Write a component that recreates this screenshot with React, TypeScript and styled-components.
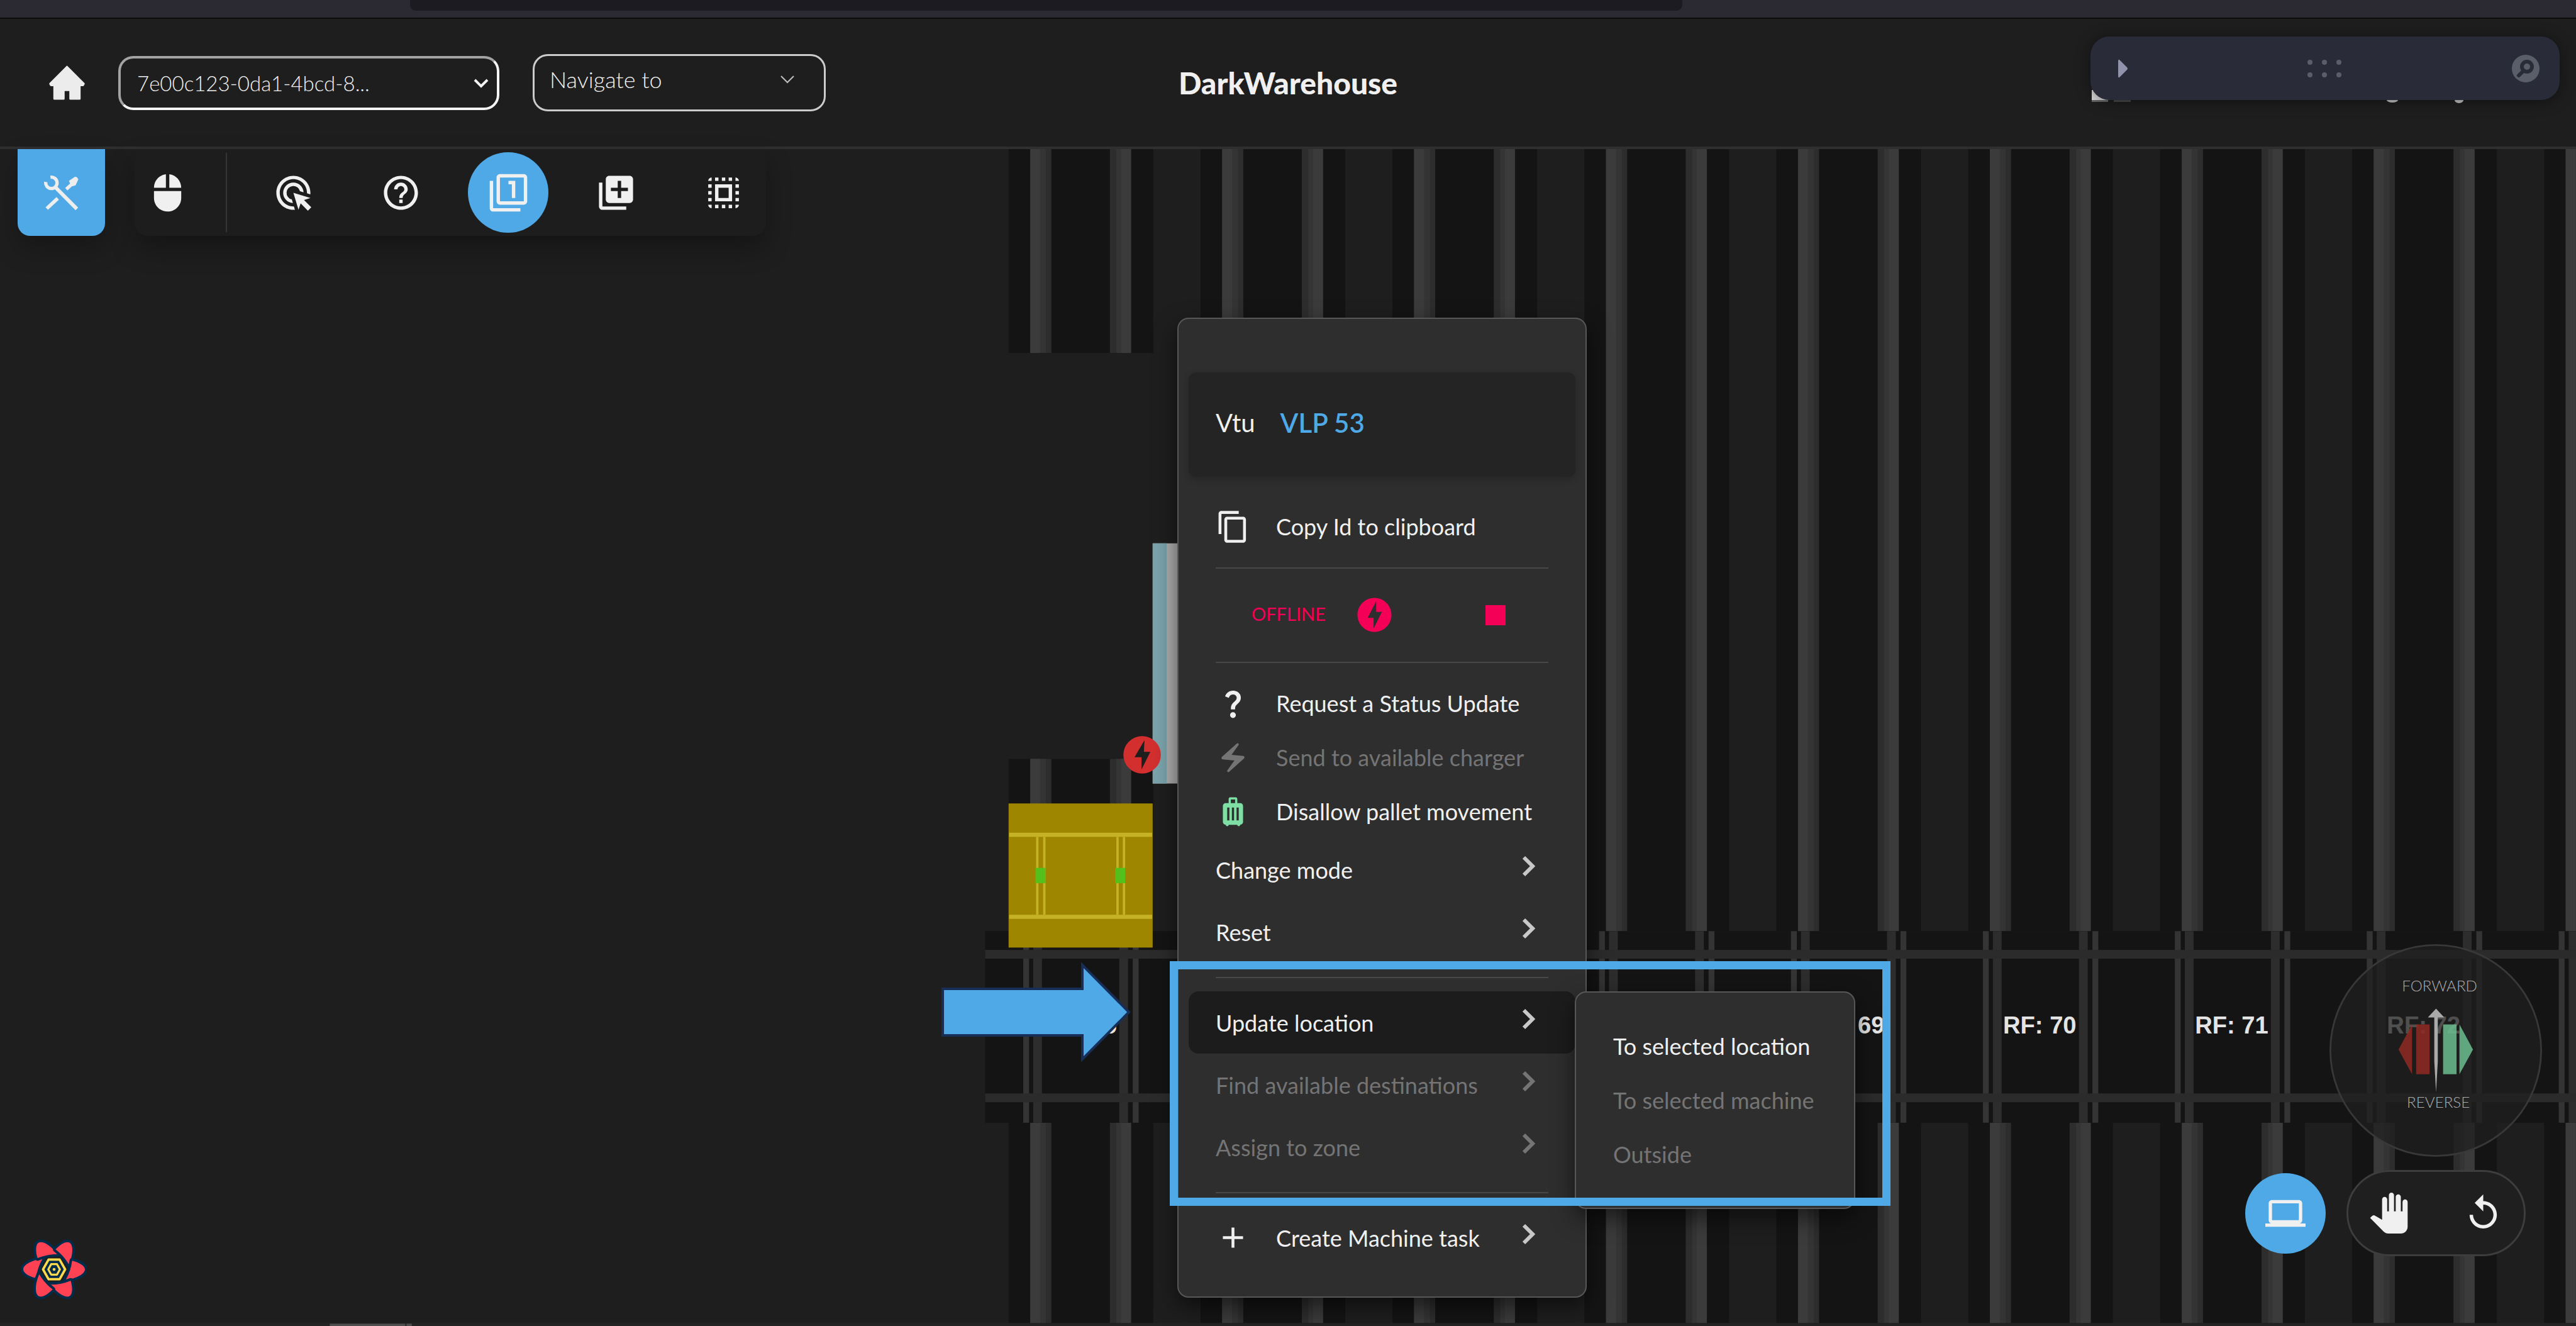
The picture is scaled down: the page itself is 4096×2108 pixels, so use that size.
import React from "react";
import styled, { createGlobalStyle, css } from "styled-components";
import {
  MdAdd,
  MdAdsClick,
  MdContentCopy,
  MdElectricBolt,
  MdFilter1,
  MdHelpOutline,
  MdLaptop,
  MdLibraryAdd,
  MdLuggage,
  MdMouse,
  MdOfflineBolt,
  MdPanTool,
  MdQuestionMark,
  MdReplay,
  MdSelectAll,
} from "react-icons/md";

const color = {
  page: "#1e1e1e",
  accent: "#4ea9e6",
  text: "#f0f0f0",
  muted: "#747474",
  surface: "#2e2e2e",
  outline: "#575757",
  danger: "#f50057",
};

const GlobalStyle = createGlobalStyle`
  *, *::before, *::after { box-sizing: border-box; }
  html, body, #root { height: 100%; }
  body {
    margin: 0;
    overflow: hidden;
    background: ${color.page};
    color: ${color.text};
    font-family: Lato, "Open Sans", sans-serif;
    font-size: 36px;
  }
  button, select { font: inherit; color: inherit; }
  button { border: 0; padding: 0; background: none; cursor: pointer; }
  svg { display: block; flex: none; }
`;

/* ---------- shell ---------- */

const Shell = styled.div`
  display: flex;
  flex-direction: column;
  height: 100vh;
`;

const BrowserStrip = styled.div`
  flex: none;
  height: 30px;
  padding: 0 1421px 0 652px;
  background: #2b2a33;
  border-bottom: 2px solid #0c0c0d;
`;

const AddressBar = styled.div`
  height: 17px;
  background: #1c1b22;
  border-radius: 0 0 9px 9px;
`;

const Header = styled.header`
  flex: none;
  display: grid;
  grid-template-columns: 1fr auto 1fr;
  align-items: center;
  height: 207px;
  padding: 0 26px;
  border-bottom: 4px solid #2f2f2f;
`;

const HeaderLeft = styled.div`
  display: flex;
  align-items: center;
  gap: 53px;
  padding-left: 52px;
`;

const HomeLink = styled.a`
  display: block;
  color: #ececec;
`;

const Title = styled.h1`
  margin: 0;
  font-size: 48px;
  font-weight: 900;
  line-height: 56px;
`;

const Picker = styled.div<{ $wide?: boolean }>`
  display: grid;
  grid-template-columns: minmax(0, 1fr) auto;
  align-items: center;
  width: ${(p) => (p.$wide ? 606 : 466)}px;
`;

const pickerBox = css`
  grid-area: 1 / 1 / 2 / 3;
  width: 100%;
  appearance: none;
  background: ${color.page};
  border-radius: 24px;
  font-weight: 300;
  text-overflow: ellipsis;
`;

const SessionSelect = styled.select`
  ${pickerBox}
  height: 86px;
  padding: 0 60px 0 26px;
  border: 4px solid;
  border-color: #a3a3a3 #f4f4f4 #f4f4f4 #a3a3a3;
  font-size: 33px;
`;

const NavigateSelect = styled.select`
  ${pickerBox}
  height: 91px;
  padding: 0 80px 12px 24px;
  border: 3px solid #cccccc;
  font-size: 36px;
`;

const PickerArrow = styled.span<{ $inset: number; $raised?: boolean }>`
  grid-area: 1 / 2;
  z-index: 1;
  margin-right: ${(p) => p.$inset}px;
  padding-bottom: ${(p) => (p.$raised ? 12 : 0)}px;
  pointer-events: none;
`;

const HeaderRight = styled.div`
  position: relative;
  z-index: 0;
  align-self: start;
  justify-self: end;
  width: 746px;
  margin-top: 28px;
`;

const CoveredItems = styled.svg`
  position: absolute;
  top: 0;
  left: 0;
`;

const DevPanel = styled.div`
  position: relative;
  display: flex;
  align-items: center;
  justify-content: space-between;
  height: 101px;
  padding: 0 32px 0 43px;
  background: #292c38;
  border-radius: 30px;
  box-shadow: 0 2px 24px rgba(0, 0, 0, 0.45);
`;

/* ---------- workspace ---------- */

const Workspace = styled.main`
  position: relative;
  flex: 1;
  min-height: 0;
`;

const FloorSvg = styled.svg`
  position: absolute;
  inset: 0;
  width: 100%;
  height: 100%;
`;

const ToolRow = styled.div`
  position: relative;
  display: flex;
  gap: 47px;
  padding-left: 28px;
`;

const ToolsToggle = styled.button`
  display: grid;
  place-items: center;
  width: 139px;
  height: 138px;
  background: ${color.accent};
  border-radius: 0 0 20px 20px;
  box-shadow: 0 20px 40px rgba(0, 0, 0, 0.25);
`;

const ToolPanel = styled.div`
  display: flex;
  align-items: center;
  height: 138px;
  padding-right: 4px;
  background: #1d1d1d;
  border-radius: 0 0 20px 20px;
  box-shadow: 0 20px 40px rgba(0, 0, 0, 0.3);
`;

const ToolDivider = styled.span`
  width: 2px;
  height: 126px;
  margin: 0 41px;
  background: #353535;
`;

const ToolGroup = styled.div`
  display: flex;
  gap: 43px;
`;

const RoundButton = styled.button<{ $active?: boolean; $narrow?: boolean }>`
  display: grid;
  place-items: center;
  width: ${(p) => (p.$narrow ? 104 : 128)}px;
  height: 128px;
  border-radius: 64px;
  color: #f0f0f0;
  background: ${(p) => (p.$active ? color.accent : "none")};
`;

/* ---------- context menu ---------- */

const popup = css`
  position: absolute;
  margin: 0;
  background: ${color.surface};
  border: 2px solid ${color.outline};
  border-radius: 18px;
  box-shadow: 0 14px 36px rgba(0, 0, 0, 0.55);
`;

const ContextMenu = styled.div`
  ${popup}
  top: 268px;
  left: 1872px;
  z-index: 0;
  width: 651px;
  padding: 85px 16px 44px;
`;

const MachineHeading = styled.div`
  display: flex;
  align-items: center;
  gap: 40px;
  height: 166px;
  margin-bottom: 36px;
  padding: 0 43px 6px;
  background: #242424;
  border-radius: 12px;
  font-size: 40px;
  box-shadow: 0 4px 12px rgba(0, 0, 0, 0.2);
`;

const MachineName = styled.strong`
  color: ${color.accent};
  font-size: 42px;
  font-weight: 600;
`;

const MenuItem = styled.button<{ $tall?: boolean; $selected?: boolean }>`
  display: flex;
  align-items: center;
  gap: 42px;
  width: 100%;
  height: ${(p) => (p.$tall ? 99 : 86)}px;
  padding: 0 64px 0 43px;
  border-radius: 16px;
  background: ${(p) => (p.$selected ? "#1c1c1c" : "none")};
  color: ${color.text};
  text-align: left;
  white-space: nowrap;

  &:disabled {
    color: ${color.muted};
    cursor: default;
  }
`;

const MenuIcon = styled.span<{ $tint?: string }>`
  display: grid;
  place-items: center;
  width: 54px;
  color: ${(p) => p.$tint ?? "inherit"};
`;

const MenuLabel = styled.span`
  flex: 1;
`;

const MenuArrow = styled.svg`
  color: #c8c8c8;

  ${MenuItem}:disabled & {
    color: ${color.muted};
  }
`;

const Separator = styled.hr`
  height: 2px;
  margin: 22px 43px 21px;
  border: 0;
  background: #484848;
`;

const StatusRow = styled.div`
  display: flex;
  align-items: center;
  height: 105px;
  padding-left: 100px;
  color: ${color.danger};
  font-size: 29px;
`;

const StatusText = styled.span`
  width: 163px;
  padding-bottom: 4px;
`;

const StopSquare = styled.span`
  width: 32px;
  height: 32px;
  margin-left: 144px;
  background: ${color.danger};
`;

const SubmenuAnchor = styled.div`
  position: relative;
`;

const Submenu = styled.div`
  ${popup}
  top: 0;
  left: calc(100% - 1px);
  z-index: 1;
  width: 446px;
  padding: 42px 0;
`;

const SubmenuItem = styled(MenuItem)`
  padding: 0 59px;
`;

/* ---------- overlays ---------- */

const HighlightFrame = styled.div`
  position: absolute;
  top: 1291px;
  left: 1860px;
  width: 1146px;
  height: 389px;
  border: 13px solid ${color.accent};
  pointer-events: none;
`;

const HighlightArrow = styled.svg`
  position: absolute;
  top: 1292px;
  left: 1497px;
`;

const Compass = styled.svg`
  position: absolute;
  right: 54px;
  bottom: 269px;
`;

const ViewControls = styled.div`
  position: absolute;
  right: 80px;
  bottom: 111px;
  display: flex;
  align-items: center;
  gap: 33px;
`;

const ControlPill = styled.div`
  display: flex;
  align-items: center;
  justify-content: space-between;
  width: 285px;
  height: 137px;
  padding: 0 32px;
  background: #1f1f1f;
  border: 3px solid #3d3d3d;
  border-radius: 69px;
`;

const PillButton = styled.button`
  color: #f0f0f0;
`;

const QueryToggle = styled.button`
  position: absolute;
  left: 34px;
  bottom: 41px;
`;

/* ---------- drawings ---------- */

const PITCH = 327.7;
const FIRST_AISLE = 1722;
const FLOOR_TOP = 255;
const TRACK_TOP = 1590;
const TRACK_BOTTOM = 1917;
const FLOOR_BOTTOM = 2259;

const rackLabels = [
  { aisle: 0, rack: 65 },
  { aisle: 4, rack: 69 },
  { aisle: 5, rack: 70 },
  { aisle: 6, rack: 71 },
  { aisle: 7, rack: 72 },
];

function Lane({ x, from, to }: { x: number; from: number; to: number }) {
  const h = to - from;
  return (
    <g>
      <rect x={x} y={from} width={247} height={h} fill="#141414" />
      <rect x={x + 37} y={from} width={36} height={h} fill="#2d2d2d" />
      <rect x={x + 37} y={from} width={27} height={h} fill="#343434" />
      <rect x={x + 37} y={from} width={17} height={h} fill="#3b3b3b" />
      <rect x={x + 173} y={from} width={36} height={h} fill="#2d2d2d" />
      <rect x={x + 184} y={from} width={25} height={h} fill="#353535" />
      <rect x={x + 192} y={from} width={17} height={h} fill="#3b3b3b" />
    </g>
  );
}

function Floor() {
  const aisles = Array.from({ length: 9 }, (_, k) => FIRST_AISLE + k * PITCH);
  return (
    <FloorSvg viewBox="0 255 4400 2009" preserveAspectRatio="xMinYMin slice" aria-hidden="true">
      {aisles.map((x, k) => (
        <g key={k}>
          {k === 0 ? (
            <>
              <Lane x={x} from={FLOOR_TOP} to={603} />
              <Lane x={x} from={1296} to={1400} />
            </>
          ) : (
            <Lane x={x} from={FLOOR_TOP} to={TRACK_TOP} />
          )}
          <Lane x={x} from={TRACK_BOTTOM} to={FLOOR_BOTTOM} />
        </g>
      ))}

      <rect x={1682} y={TRACK_TOP} width={2718} height={TRACK_BOTTOM - TRACK_TOP} fill="#141414" />
      {aisles.map((x, k) => (
        <g key={k}>
          <rect x={x + 25} y={TRACK_TOP} width={10} height={327} fill="#343434" />
          <rect x={x + 42} y={TRACK_TOP} width={15} height={327} fill="#2d2d2d" />
          <rect x={x + 189} y={TRACK_TOP} width={15} height={327} fill="#2d2d2d" />
          <rect x={x + 212} y={TRACK_TOP} width={10} height={327} fill="#343434" />
        </g>
      ))}
      <rect x={1682} y={1622} width={2718} height={15} fill="#2b2b2b" />
      <rect x={1682} y={1867} width={2718} height={15} fill="#2b2b2b" />

      {rackLabels.map(({ aisle, rack }) => (
        <text
          key={rack}
          x={aisles[aisle] + 122}
          y={1765}
          textAnchor="middle"
          fill="#e4e4e4"
          fontFamily="'Liberation Sans', Arial, sans-serif"
          fontWeight={700}
          fontSize={41}
        >
          {`RF: ${rack}`}
        </text>
      ))}

      <g>
        <rect x={1722} y={1372} width={246} height={246} fill="#9e8600" />
        <g fill="#c5b325">
          <rect x={1723} y={1422} width={244} height={7} />
          <rect x={1723} y={1562} width={244} height={7} />
          {[1769, 1781, 1906, 1917].map((x) => (
            <rect key={x} x={x} y={1429} width={4} height={133} />
          ))}
        </g>
        <rect x={1768} y={1482} width={17} height={26} fill="#53c01b" />
        <rect x={1904} y={1482} width={17} height={26} fill="#53c01b" />
      </g>

      <rect x={1968} y={928} width={70} height={410} fill="#b0b0b0" />
      <rect x={1968} y={928} width={24} height={410} fill="#7ba3ab" />
      <circle cx={1950} cy={1289} r={32} fill="#d32f2f" />
      <path d="M1954 1264 L1937 1293 H1949 L1949 1314 L1964 1284 H1953 Z" fill="#1e1e1e" />

      <rect x={0} y={FLOOR_BOTTOM} width={4400} height={5} fill="#232323" />
      <rect x={563} y={FLOOR_BOTTOM + 1} width={129} height={4} fill="#4e4e4e" />
      <rect x={694} y={FLOOR_BOTTOM + 1} width={9} height={4} fill="#4e4e4e" />
    </FloorSvg>
  );
}

function HomeIcon() {
  return (
    <svg width="57" height="55" viewBox="0 0 184 177" fill="currentColor" stroke="currentColor" strokeWidth="10" strokeLinejoin="round">
      <path d="M92 7 L178 94 L174 101 H157 V171 H109 V126 H75 V171 H27 V101 H10 L6 94 Z" />
    </svg>
  );
}

function ToolsIcon() {
  return (
    <svg width="55" height="55" viewBox="0 0 177 177" fill="none" stroke="#eeeeee">
      <path d="M9 33 A29 29 0 1 0 33 9" strokeWidth="17" />
      <path d="M60 62 L168 171" strokeWidth="19" />
      <path d="M70 117 L14 169" strokeWidth="18" />
      <path d="M147 40 L114 70" strokeWidth="17" />
      <path d="M129 28 L158 8 L168 10 L174 20 L160 50 L141 54 Z" fill="#eeeeee" strokeWidth="3" strokeLinejoin="round" />
    </svg>
  );
}

function DevPanelArrow() {
  return (
    <svg width="30" height="32" viewBox="0 0 30 32">
      <path d="M3 2 L15 14 Q17 16 15 18 L3 30 Q1 31 1 28 V4 Q1 1 3 2 Z" fill="#9093ab" />
    </svg>
  );
}

function DragDots() {
  return (
    <svg width="54" height="28" viewBox="0 0 54 28" fill="#5b5e69">
      {[4, 27, 50].map((x) => (
        <g key={x}>
          <circle cx={x} cy="4" r="4" />
          <circle cx={x} cy="24" r="4" />
        </g>
      ))}
    </svg>
  );
}

function SearchBadge() {
  return (
    <svg width="44" height="44" viewBox="0 0 44 44" fill="none">
      <circle cx="22" cy="22" r="22" fill="#5a5e68" />
      <circle cx="24" cy="19" r="8" stroke="#292c38" strokeWidth="6" />
      <path d="M18 26 L11 33" stroke="#292c38" strokeWidth="6" strokeLinecap="round" />
    </svg>
  );
}

function Caret({ thin }: { thin?: boolean }) {
  return (
    <svg width="24" height="16" viewBox="0 0 24 16" fill="none">
      <path d="M2 3 L12 13 L22 3" stroke={thin ? "#c0c0c0" : "#f4f4f4"} strokeWidth={thin ? 2 : 4} />
    </svg>
  );
}

function ItemArrow() {
  return (
    <MenuArrow width="20" height="45" viewBox="0 0 20 45" fill="none" stroke="currentColor" strokeWidth="6">
      <path d="M2 3 L16 17 L2 31" />
    </MenuArrow>
  );
}

function CompassDrawing() {
  return (
    <Compass width="338" height="338" viewBox="0 0 363 363" role="img" aria-label="Travel direction">
      <circle cx="181.5" cy="181.5" r="180" fill="#202020" fillOpacity="0.76" stroke="#383838" strokeWidth="3" />
      <g fill="#aaaaaa" fontSize="26" fontWeight="300" textAnchor="middle">
        <text x="188" y="81">FORWARD</text>
        <text x="186" y="279">REVERSE</text>
      </g>
      <g fill="#932a22" fillOpacity="0.84">
        <path d="M118 180 L141 137 V222 Z" />
        <rect x="148" y="137" width="23" height="85" />
      </g>
      <g fill="#6cc192" fillOpacity="0.84">
        <rect x="194" y="137" width="23" height="85" />
        <path d="M245 180 L222 137 V222 Z" />
      </g>
      <path d="M182 110 L196 125 H185 V200 L182 253 L179 200 V125 H168 Z" fill="#aaaaaa" />
    </Compass>
  );
}

function QueryLogo() {
  return (
    <svg width="104" height="98" viewBox="-56 -53 112 106">
      {[0, 60, 120, 180, 240, 300].map((a) => (
        <path
          key={a}
          transform={`rotate(${a})`}
          d="M-20 -18 C-38 -16 -53 -8 -53 0 C-53 6 -44 12 -31 15 Q-29 -2 -20 -18 Z"
          fill="#ff4154"
          stroke="#002c4b"
          strokeWidth="9"
          paintOrder="stroke"
          strokeLinejoin="round"
        />
      ))}
      <g fill="#002c4b" stroke="#ffd94c" strokeLinejoin="round">
        <path d="M-19 0 L-9.500 -17 H9.500 L19 0 L9.500 17 H-9.500 Z" strokeWidth="4" />
        <path d="M-10 0 L-5 -9 H5 L10 0 L5 9 H-5 Z" strokeWidth="3.500" />
      </g>
      <circle r="2.500" fill="#ffd94c" />
    </svg>
  );
}

/* ---------- page ---------- */

const tools = [
  { label: "Pick target", Icon: MdAdsClick },
  { label: "Help", Icon: MdHelpOutline },
  { label: "Single selection", Icon: MdFilter1, active: true },
  { label: "Add to selection", Icon: MdLibraryAdd },
  { label: "Select area", Icon: MdSelectAll },
];

export default function App() {
  return (
    <Shell>
      <GlobalStyle />
      <BrowserStrip>
        <AddressBar />
      </BrowserStrip>

      <Header>
        <HeaderLeft>
          <HomeLink href="#home" aria-label="Home">
            <HomeIcon />
          </HomeLink>
          <Picker $wide>
            <SessionSelect aria-label="Session">
              <option>7e00c123-0da1-4bcd-8...</option>
            </SessionSelect>
            <PickerArrow $inset={17}>
              <Caret />
            </PickerArrow>
          </Picker>
          <Picker>
            <NavigateSelect aria-label="Navigate to">
              <option>Navigate to</option>
            </NavigateSelect>
            <PickerArrow $inset={49} $raised>
              <Caret thin />
            </PickerArrow>
          </Picker>
        </HeaderLeft>
        <Title>DarkWarehouse</Title>
        <HeaderRight>
          <CoveredItems width="746" height="110" viewBox="0 0 746 110" aria-hidden="true">
            <rect x="2" y="85" width="28" height="16" fill="#dddddd" />
            <rect x="2" y="101" width="26" height="3" fill="#6a6a6a" />
            <rect x="37" y="101" width="27" height="3" fill="#4a4a4a" />
            <ellipse cx="480" cy="101" rx="9" ry="4" fill="#c8c8c8" />
            <ellipse cx="586" cy="101" rx="7" ry="5" fill="#c8c8c8" />
          </CoveredItems>
          <DevPanel>
            <button aria-label="Expand panel">
              <DevPanelArrow />
            </button>
            <DragDots />
            <button aria-label="Search">
              <SearchBadge />
            </button>
          </DevPanel>
        </HeaderRight>
      </Header>

      <Workspace>
        <Floor />

        <ToolRow>
          <ToolsToggle aria-label="Tools">
            <ToolsIcon />
          </ToolsToggle>
          <ToolPanel>
            <RoundButton $narrow aria-label="Mouse">
              <MdMouse size={65} />
            </RoundButton>
            <ToolDivider />
            <ToolGroup>
              {tools.map(({ label, Icon, active }) => (
                <RoundButton key={label} $active={active} aria-label={label}>
                  <Icon size={65} />
                </RoundButton>
              ))}
            </ToolGroup>
          </ToolPanel>
        </ToolRow>

        <CompassDrawing />

        <ViewControls>
          <RoundButton $active aria-label="Screen view">
            <MdLaptop size={64} />
          </RoundButton>
          <ControlPill>
            <PillButton aria-label="Pan">
              <MdPanTool size={65} />
            </PillButton>
            <PillButton aria-label="Reset view">
              <MdReplay size={65} />
            </PillButton>
          </ControlPill>
        </ViewControls>

        <QueryToggle aria-label="Query tools">
          <QueryLogo />
        </QueryToggle>

        <ContextMenu role="menu">
          <MachineHeading>
            <span>Vtu</span>
            <MachineName>VLP 53</MachineName>
          </MachineHeading>
          <MenuItem>
            <MenuIcon>
              <MdContentCopy size={55} />
            </MenuIcon>
            <MenuLabel>Copy Id to clipboard</MenuLabel>
          </MenuItem>
          <Separator />
          <StatusRow>
            <StatusText>OFFLINE</StatusText>
            <MdOfflineBolt size={65} />
            <StopSquare />
          </StatusRow>
          <Separator />
          <MenuItem>
            <MenuIcon>
              <MdQuestionMark size={55} />
            </MenuIcon>
            <MenuLabel>Request a Status Update</MenuLabel>
          </MenuItem>
          <MenuItem disabled>
            <MenuIcon>
              <MdElectricBolt size={55} />
            </MenuIcon>
            <MenuLabel>Send to available charger</MenuLabel>
          </MenuItem>
          <MenuItem>
            <MenuIcon $tint="#7ddfa3">
              <MdLuggage size={55} />
            </MenuIcon>
            <MenuLabel>Disallow pallet movement</MenuLabel>
          </MenuItem>
          <MenuItem $tall>
            <MenuLabel>Change mode</MenuLabel>
            <ItemArrow />
          </MenuItem>
          <MenuItem $tall>
            <MenuLabel>Reset</MenuLabel>
            <ItemArrow />
          </MenuItem>
          <Separator />
          <SubmenuAnchor>
            <MenuItem $tall $selected>
              <MenuLabel>Update location</MenuLabel>
              <ItemArrow />
            </MenuItem>
            <Submenu role="menu">
              <SubmenuItem>To selected location</SubmenuItem>
              <SubmenuItem disabled>To selected machine</SubmenuItem>
              <SubmenuItem disabled>Outside</SubmenuItem>
            </Submenu>
          </SubmenuAnchor>
          <MenuItem $tall disabled>
            <MenuLabel>Find available destinations</MenuLabel>
            <ItemArrow />
          </MenuItem>
          <MenuItem $tall disabled>
            <MenuLabel>Assign to zone</MenuLabel>
            <ItemArrow />
          </MenuItem>
          <Separator />
          <MenuItem $tall>
            <MenuIcon>
              <MdAdd size={55} />
            </MenuIcon>
            <MenuLabel>Create Machine task</MenuLabel>
            <ItemArrow />
          </MenuItem>
        </ContextMenu>

        <HighlightFrame />
        <HighlightArrow width="302" height="160" viewBox="0 0 302 160" aria-hidden="true">
          <path
            d="M2 43 H224 V5 L298 80 L224 155 V117 H2 Z"
            fill={color.accent}
            stroke="#172f58"
            strokeWidth="4"
          />
        </HighlightArrow>
      </Workspace>
    </Shell>
  );
}
